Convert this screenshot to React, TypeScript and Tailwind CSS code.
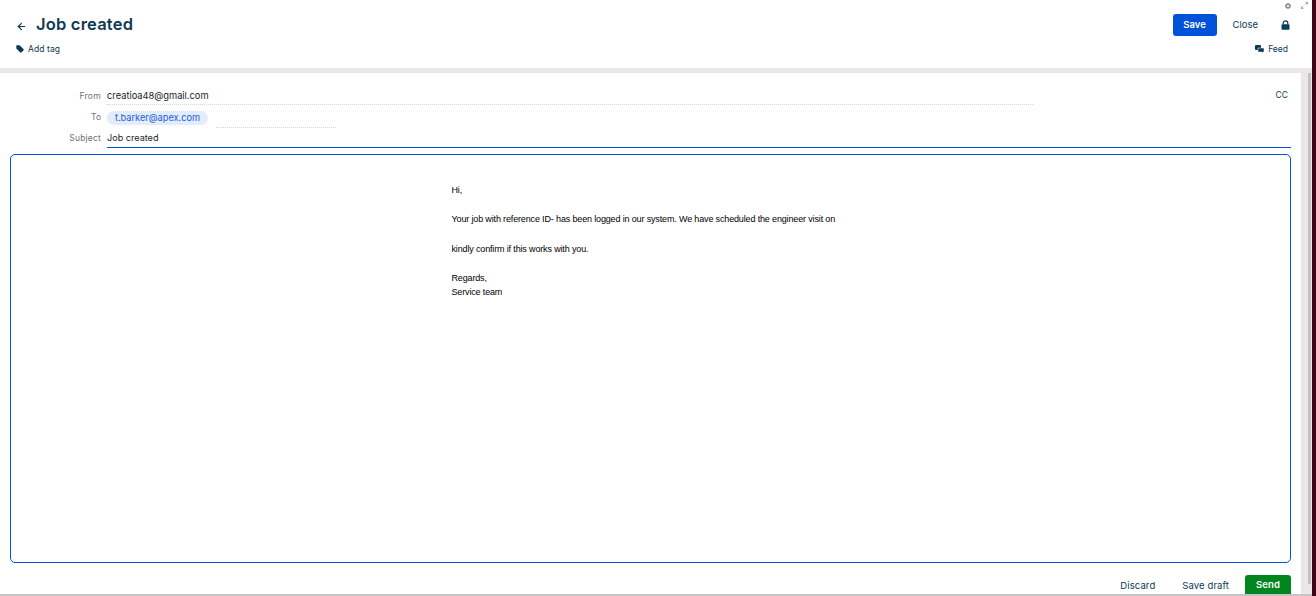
import { ArrowLeft } from "lucide-react";

const font = { fontFamily: "Inter" };

function TagIcon() {
  return (
    <svg width="8" height="8" viewBox="0 0 8 8" fill="#0d3a54">
      <path d="M0.3 0.8 C0.3 0.5 0.5 0.3 0.8 0.3 H3.6 L7.6 4.3 C7.9 4.6 7.9 5 7.6 5.3 L5.3 7.6 C5 7.9 4.6 7.9 4.3 7.6 L0.3 3.6 Z" />
    </svg>
  );
}

function FeedIcon() {
  return (
    <svg width="9" height="8" viewBox="0 0 9 8" fill="#0d3a54">
      <rect x="0" y="0" width="6" height="5" rx="1" />
      <path d="M3 3 H9 V7 H8 V8 L7 7 H3 Z" stroke="#fff" strokeWidth="0.5" />
    </svg>
  );
}

function LockIcon() {
  return (
    <svg width="9" height="10" viewBox="0 0 9 10" fill="none">
      <path d="M2.2 4.5 V3 C2.2 0.2 6.8 0.2 6.8 3 V4.5" stroke="#0d3a54" strokeWidth="1.2" />
      <rect x="0.5" y="4.2" width="8" height="5.6" rx="0.8" fill="#0d3a54" />
    </svg>
  );
}

export default function App() {
  return (
    <div className="flex h-[596px] w-[1316px] overflow-hidden bg-white text-[#0d3a54]" style={font}>
      <div className="flex min-w-0 flex-1 flex-col">
        <header className="relative flex h-[68px] shrink-0 flex-col bg-white pr-[22px] pl-[16px]">
          <div className="absolute top-[2px] right-[4px] flex items-center gap-[10px]">
            <svg width="6" height="6" viewBox="0 0 6 6" fill="#8b9399">
              <circle cx="3" cy="3" r="2.8" />
              <circle cx="3" cy="3" r="1" fill="#fff" />
            </svg>
            <svg width="7" height="7" viewBox="0 0 7 7" fill="none" stroke="#8b9399" strokeWidth="0.8">
              <path d="M0.5 6.5 L2.5 4.5 M4.5 2.5 L6.5 0.5 M4.6 0.5 H6.5 V2.4 M0.5 4.6 V6.5 H2.4" />
            </svg>
          </div>
          <div className="mt-[14px] flex h-[22px] items-center">
            <ArrowLeft size={11} strokeWidth={2.4} className="mt-[2px]" />
            <h1 className="-mt-[2px] ml-[9px] text-[16.5px] font-semibold tracking-[0.2px]">Job created</h1>
            <div className="ml-auto flex items-center">
              <button className="h-[22px] w-[44px] rounded-[3px] bg-[#0052d9] text-[9.5px] font-semibold text-white">Save</button>
              <span className="ml-[16px] text-[9.5px]">Close</span>
              <span className="ml-[23px] flex"><LockIcon /></span>
            </div>
          </div>
          <div className="mt-[7px] flex items-center justify-between pr-[2px] text-[8.5px]">
            <span className="flex items-center gap-[4px]"><TagIcon /><span className="tracking-[0.1px]">Add tag</span></span>
            <span className="flex items-center gap-[4px]"><FeedIcon />Feed</span>
          </div>
        </header>
        <div className="h-[5px] shrink-0 bg-[#ebe6ea]" />
        <div className="flex min-h-0 flex-1">
          <main className="flex min-w-0 flex-1 flex-col px-[10px]">
            <div className="mt-[12px] flex h-[20px] items-center">
              <label className="w-[91px] pt-[4px] text-right text-[8.5px] tracking-[0.3px] text-[#68727a]">From</label>
              <div className="ml-[6px] flex h-full w-[926px] items-center border-b border-dotted border-[#d3d6d8] pt-[3px] text-[9.3px] text-[#17252e]">creatioa48@gmail.com</div>
              <span className="mr-[3px] ml-auto pt-[1px] text-[8.5px]">CC</span>
            </div>
            <div className="mt-[1px] flex h-[22px] items-center">
              <label className="w-[91px] pt-[1px] text-right text-[8.5px] text-[#68727a]">To</label>
              <span className="mt-[3px] ml-[6px] flex h-[14px] w-[101px] items-center justify-center rounded-full bg-[#e3ecfb] text-[9.2px] text-[#1a5fdc]">t.barker@apex.com</span>
              <div className="ml-[8px] h-[22px] w-[120px] border-b border-dotted border-[#d3d6d8]" />
            </div>
            <div className="flex h-[21px] items-center">
              <label className="w-[91px] pt-[2px] text-right text-[8.5px] tracking-[0.2px] text-[#68727a]">Subject</label>
              <div className="ml-[6px] flex h-full flex-1 items-center border-b border-[#0052d9] pt-[2px] text-[9.1px] text-[#17252e]">Job created</div>
            </div>
            <div className="mt-[6px] h-[409px] shrink-0 rounded-[5px] border border-[#0052d9] pt-[28px] pl-[440.5px] font-['Liberation_Sans',sans-serif] text-[9px] leading-[14.5px] tracking-[-0.15px] text-black">
              <p>Hi,</p>
              <p className="mt-[14.5px]">Your job with reference ID- has been logged in our system. We have scheduled the engineer visit on</p>
              <p className="mt-[15px]">kindly confirm if this works with you.</p>
              <p className="mt-[14.5px]">Regards,</p>
              <p>Service team</p>
            </div>
            <div className="mt-[12px] flex items-start justify-end text-[9.5px] tracking-[0.1px]">
              <span className="mt-[4px]">Discard</span>
              <span className="mt-[4px] ml-[27px]">Save draft</span>
              <button className="ml-[16px] h-[19px] w-[46px] rounded-t-[3px] bg-[#00851f] pt-[2px] font-semibold text-white">Send</button>
            </div>
          </main>
          <aside className="relative w-[11px] shrink-0 bg-[#ebe6e8]">
            <div className="absolute top-0 right-[1px] bottom-[10px] w-[3px] bg-[#c4c1c2]" />
          </aside>
        </div>
        <div className="h-[2px] shrink-0 bg-[#c4c4c4]" />
      </div>
      <div className="w-[4px] shrink-0 bg-[#3d0614]" />
    </div>
  );
}
